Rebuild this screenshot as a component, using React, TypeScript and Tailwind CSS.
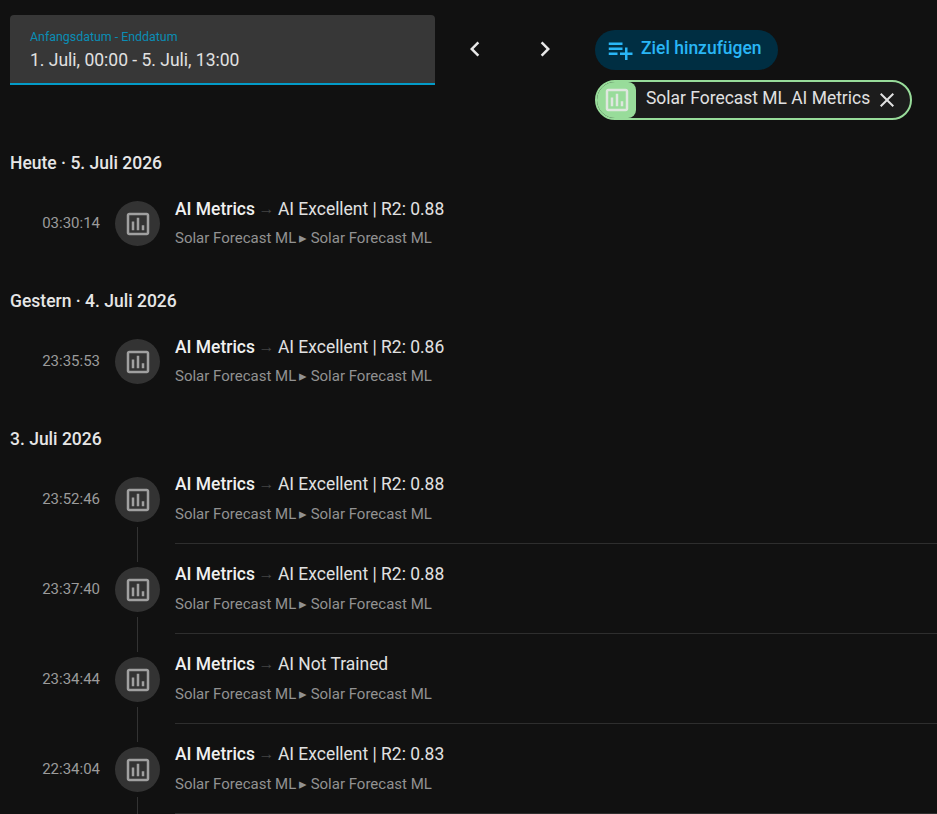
const CHART = "M9 17H7V10H9V17M13 17H11V7H13V17M17 17H15V13H17V17M19 19H5V5H19V19.1M19 3H5C3.9 3 3 3.9 3 5V19C3 20.1 3.9 21 5 21H19C20.1 21 21 20.1 21 19V5C21 3.9 20.1 3 19 3Z";

function Icon({ d, className }: { d: string; className: string }) {
  return (
    <svg viewBox="0 0 24 24" className={className} fill="currentColor">
      <path d={d} />
    </svg>
  );
}

function Row({ time, state, line }: { time: string; state: string; line?: boolean }) {
  return (
    <div className={line ? "flex h-[90px]" : "flex h-[60px]"}>
      <div className="w-[100px] shrink-0 pt-[16px] text-right text-[15px] leading-[20px] text-[#9b9b9b]">{time}</div>
      <div className="ml-[15px] flex w-[45px] shrink-0 flex-col items-center pt-[4px]">
        <div className="flex h-[45px] w-[45px] items-center justify-center rounded-full bg-[#333333] text-[#a0a0a0]">
          <Icon d={CHART} className="h-[30px] w-[30px]" />
        </div>
        {line && <div className="mt-[5px] h-[35px] w-px bg-[#333333]" />}
      </div>
      <div className="ml-[15px] flex min-w-0 flex-1 flex-col">
        <div className={line ? "-mt-[1px] flex h-[24px] items-center whitespace-nowrap text-[17.45px] leading-[24px]" : "flex h-[24px] items-center whitespace-nowrap text-[17.45px] leading-[24px]"}>
          <span className="font-medium text-[#f0f0f0]">AI Metrics</span>
          <span className="w-[23px] text-center text-[16px] text-[#444444]">→</span>
          <span className="text-[#e1e1e1]">{state}</span>
        </div>
        <div className={line ? "mt-[8px] whitespace-nowrap text-[15px] leading-[20px] text-[#929292]" : "mt-[7px] whitespace-nowrap text-[15px] leading-[20px] text-[#929292]"}>
          Solar Forecast ML <span className="-ml-[1px]">▸</span> Solar Forecast ML
        </div>
        {line && <div className="mt-[19px] h-px bg-[#2e2e2e]" />}
      </div>
    </div>
  );
}

export default function App() {
  return (
    <div className="h-[814px] w-[937px] overflow-hidden bg-[#111111] font-['Roboto',sans-serif] text-[#e1e1e1]">
      <div className="flex h-[127px] items-start pl-[10px] pt-[15px]">
        <div className="flex h-[70px] w-[425px] flex-col rounded-t-[4px] border-b-2 border-[#039bc8] bg-[#373737] px-[20px] pt-[14px]">
          <div className="text-[12.4px] leading-[16px] text-[#0a8db5]">Anfangsdatum - Enddatum</div>
          <div className="mt-[3px] text-[17.5px] leading-[24px] text-[#e1e1e1]">1. Juli, 00:00 - 5. Juli, 13:00</div>
        </div>
        <div className="ml-[25px] mt-[19px] flex gap-[40px] text-[#e8e8e8]">
          <Icon d="M15.41,16.58L10.83,12L15.41,7.41L14,6L8,12L14,18L15.41,16.58Z" className="h-[30px] w-[30px]" />
          <Icon d="M8.59,16.58L13.17,12L8.59,7.41L10,6L16,12L10,18L8.59,16.58Z" className="h-[30px] w-[30px]" />
        </div>
        <div className="ml-[35px] mt-[15px] flex flex-col items-start gap-[10px]">
          <div className="flex h-[40px] w-[183px] items-center rounded-full bg-[#002e42] pl-[10px] text-[#29b6f6]">
            <Icon d="M3 16H10V14H3M18 14V10H16V14H12V16H16V20H18V16H22V14M14 6H3V8H14M14 10H3V12H14V10Z" className="h-[30px] w-[30px] shrink-0" />
            <span className="ml-[6px] -translate-y-[2px] text-[17.5px] font-medium">Ziel hinzufügen</span>
          </div>
          <div className="flex h-[40px] w-[317px] items-center overflow-hidden rounded-full border-2 border-[#98dc9a] bg-[#1c1c1c]">
            <div className="flex h-full w-[39px] items-center justify-center rounded-r-[8px] bg-[#98dc9a] text-[#dfe7df]">
              <Icon d={CHART} className="h-[30px] w-[30px]" />
            </div>
            <span className="ml-[10px] w-[224px] -translate-y-[2px] whitespace-nowrap text-[17.45px] text-[#e1e1e1]">Solar Forecast ML AI Metrics</span>
            <Icon d="M19,6.41L17.59,5L12,10.59L6.41,5L5,6.41L10.59,12L5,17.59L6.41,19L12,13.41L17.59,19L19,17.59L13.41,12L19,6.41Z" className="ml-[5px] h-[24px] w-[24px] shrink-0 text-[#e1e1e1]" />
          </div>
        </div>
      </div>
      <div className="pl-[10px] pt-[24px] text-[17.5px] font-medium leading-[24px] text-[#e6e6e6]">Heute · 5. Juli 2026</div>
      <div className="mt-[22px]">
        <Row time="03:30:14" state="AI Excellent | R2: 0.88" />
      </div>
      <div className="pl-[10px] pt-[32px] text-[17.5px] font-medium leading-[24px] text-[#e6e6e6]">Gestern · 4. Juli 2026</div>
      <div className="mt-[22px]">
        <Row time="23:35:53" state="AI Excellent | R2: 0.86" />
      </div>
      <div className="pl-[10px] pt-[32px] text-[17.5px] font-medium leading-[24px] text-[#e6e6e6]">3. Juli 2026</div>
      <div className="mt-[22px]">
        <Row line time="23:52:46" state="AI Excellent | R2: 0.88" />
        <Row line time="23:37:40" state="AI Excellent | R2: 0.88" />
        <Row line time="23:34:44" state="AI Not Trained" />
        <Row line time="22:34:04" state="AI Excellent | R2: 0.83" />
      </div>
    </div>
  );
}
